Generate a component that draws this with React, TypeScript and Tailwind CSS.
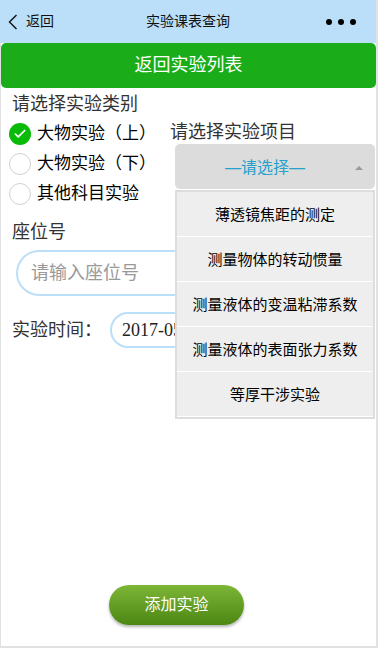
import { Check } from "lucide-react";

const projects = [
  "薄透镜焦距的测定",
  "测量物体的转动惯量",
  "测量液体的变温粘滞系数",
  "测量液体的表面张力系数",
  "等厚干涉实验",
];

const categories = [
  { label: "大物实验（上）", checked: true },
  { label: "大物实验（下）", checked: false },
  { label: "其他科目实验", checked: false },
];

const Radio = ({ checked }: { checked: boolean }) =>
  checked ? (
    <span className="flex h-[22px] w-[22px] items-center justify-center rounded-full bg-[#09bb07]">
      <Check className="h-[14px] w-[14px] text-white" strokeWidth={3} />
    </span>
  ) : (
    <span className="h-[22px] w-[22px] rounded-full border border-[#d1d1d1] bg-white" />
  );

export default function App() {
  return (
    <div className="flex h-[648px] w-[378px] flex-col overflow-hidden border-r-2 border-b-2 border-[#e1e1e1] bg-white font-['Liberation_Serif','Noto_Sans_CJK_SC',serif]">
      <header className="grid h-[43px] shrink-0 grid-cols-[1fr_auto_1fr] items-center bg-[#bbdff8] font-['Liberation_Sans','Noto_Sans_CJK_SC',sans-serif] text-[14px] text-[#111]">
        <div className="flex items-center pl-[8px]">
          <svg width="10" height="16" viewBox="0 0 10 16" className="mr-[8px]">
            <path d="M8.5 1 L1.5 8 L8.5 15" fill="none" stroke="#111" strokeWidth="1.4" />
          </svg>
          <span>返回</span>
        </div>
        <div>实验课表查询</div>
        <div className="flex items-center justify-end gap-[6px] pr-[20px]">
          <span className="h-[6px] w-[6px] rounded-full bg-black" />
          <span className="h-[6px] w-[6px] rounded-full bg-black" />
          <span className="h-[6px] w-[6px] rounded-full bg-black" />
        </div>
      </header>

      <div className="flex flex-1 flex-col border-l border-[#e1e1e1]">
        <button className="flex h-[45px] shrink-0 items-center justify-center rounded-[5px] bg-[#1aad19] font-['Liberation_Sans','Noto_Sans_CJK_SC',sans-serif] text-[18px] text-white">
          返回实验列表
        </button>

        <div className="flex flex-1 flex-col pl-[8px] pr-[1px]">
          <div className="mt-[4px] pl-[3px] text-[18px] leading-[24px] text-[#333]">请选择实验类别</div>

          <div className="flex">
            <div className="mt-[3px] w-[161px] shrink-0">
              {categories.map((c) => (
                <div key={c.label} className="flex h-[30px] items-center gap-[6px]">
                  <Radio checked={c.checked} />
                  <span className="font-['Liberation_Sans','Noto_Sans_CJK_SC',sans-serif] text-[17px] text-black">
                    {c.label}
                  </span>
                </div>
              ))}
            </div>
            <div className="flex-1">
              <div className="mt-[4px] text-[18px] leading-[24px] text-[#333]">请选择实验项目</div>
              <div className="relative ml-[5px]">
                <div className="flex h-[45px] items-center justify-center rounded-[5px] bg-[#dcdcdc] pr-[20px] pt-[3px] font-['Liberation_Sans','Noto_Sans_CJK_SC',sans-serif] text-[16px] text-[#259fcb]">
                  —请选择—
                  <span className="absolute right-[12px] top-[22px] h-0 w-0 border-x-[4px] border-b-[4px] border-x-transparent border-b-[#999]" />
                </div>
                <ul className="absolute left-0 right-0 top-full z-10 mt-[1px] border-2 border-[#dddddd] bg-[#dddddd] font-['Liberation_Sans','Noto_Sans_CJK_SC',sans-serif] text-[15px] text-black">
                  {projects.map((p) => (
                    <li key={p} className="flex h-[45px] items-center justify-center border-b border-white bg-[#eeeeee] pt-[2px]">
                      {p}
                    </li>
                  ))}
                </ul>
              </div>
            </div>
          </div>

          <div className="mt-[11px] pl-[3px] text-[18px] leading-[24px] text-[#333]">座位号</div>
          <div className="ml-[7px] mt-[6px] flex h-[46px] w-[350px] items-center rounded-full border-2 border-[#bbdff8] px-[13px] text-[18px] text-[#999]">
            请输入座位号
          </div>

          <div className="mt-[16px] flex items-center">
            <span className="w-[101px] pl-[3px] text-[18px] text-[#333]">实验时间：</span>
            <div className="flex h-[36px] w-[220px] items-center rounded-full border-2 border-[#bbdff8] px-[10px] text-[18px] text-[#222]">
              2017-05-12
            </div>
          </div>

          <button className="mb-[21px] ml-[100px] mt-auto flex h-[40px] w-[135px] items-center justify-center rounded-full bg-gradient-to-b from-[#7db636] to-[#4c8712] font-['Liberation_Sans','Noto_Sans_CJK_SC',sans-serif] text-[16px] text-white shadow-[0_2px_3px_rgba(0,0,0,0.3)]">
            添加实验
          </button>
        </div>
      </div>
    </div>
  );
}
